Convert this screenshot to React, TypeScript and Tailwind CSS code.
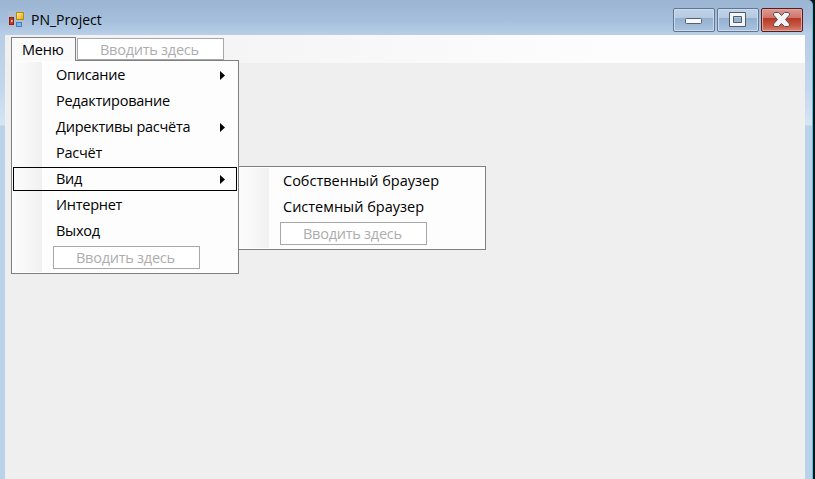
import React from "react";

type Item = { label: string; arrow?: boolean; active?: boolean };

const items: Item[] = [
  { label: "Описание", arrow: true },
  { label: "Редактирование" },
  { label: "Директивы расчёта", arrow: true },
  { label: "Расчёт" },
  { label: "Вид", arrow: true, active: true },
  { label: "Интернет" },
  { label: "Выход" },
];

const subItems: Item[] = [{ label: "Собственный браузер" }, { label: "Системный браузер" }];

function TypeHere({ className = "" }: { className?: string }) {
  return (
    <div
      className={`flex w-[147px] items-center border border-[#a8a8a8] bg-white pl-[22px] tracking-[-0.25px] text-[#adadad] ${className}`}
    >
      Вводить здесь
    </div>
  );
}

function MenuRow({ label, arrow, active }: Item) {
  return (
    <div className="flex h-[26px] items-center">
      <div
        className={`flex h-6 w-full items-center justify-between border pr-[11px] pl-[42px] ${
          active ? "border-black" : "border-transparent"
        }`}
      >
        <span>{label}</span>
        {arrow && (
          <svg width="5" height="9" viewBox="0 0 5 9">
            <path d="M0 0L5 4.5L0 9Z" fill="#000" />
          </svg>
        )}
      </div>
    </div>
  );
}

function Popup({ list, className }: { list: Item[]; className: string }) {
  return (
    <div className={`absolute border border-[#808080] bg-[#fdfdfd] p-px ${className}`}>
      <div className="h-full bg-[linear-gradient(to_right,#fcfcfc_0px,#f8f8f8_12px,#f0f0f0_29px,#fdfdfd_29px)]">
        {list.map((i) => (
          <MenuRow key={i.label} {...i} />
        ))}
        <TypeHere className="mt-[2px] ml-10 h-[23px]" />
      </div>
    </div>
  );
}

function AppIcon() {
  return (
    <svg width="17" height="17" viewBox="0 0 17 17">
      <defs>
        <linearGradient id="gold" x2="1" y2="1">
          <stop stopColor="#fff09a" />
          <stop offset="1" stopColor="#e3a70c" />
        </linearGradient>
      </defs>
      <rect width="17" height="17" fill="#b7bfce" opacity=".6" />
      <rect x="1.5" y="6.5" width="4" height="7" fill="#c23a22" stroke="#8b2114" />
      <rect x="3" y="9" width="1.5" height="2" fill="#ffd5c4" />
      <rect x="8.5" y="1.5" width="7" height="7" fill="url(#gold)" stroke="#b88716" />
      <rect x="8.5" y="11.5" width="5" height="4" fill="#77b4f2" stroke="#487fbf" />
    </svg>
  );
}

function WindowButtons() {
  const base = "flex h-6 w-[42px] items-center justify-center rounded-[2px] border";
  const blue =
    "border-[#63768f] bg-[linear-gradient(#c1d3e8_0%,#b4c9e1_42%,#94b0cf_43%,#aac3df_100%)] shadow-[inset_0_0_0_1px_#c9dcef]";
  return (
    <div className="flex gap-[2px]">
      <div className={`${base} ${blue}`}>
        <svg width="18" height="24" viewBox="0 0 18 24">
          <rect x=".5" y="10.5" width="16" height="5" rx="1" fill="#fafafa" stroke="#55606e" />
        </svg>
      </div>
      <div className={`${base} ${blue}`}>
        <svg width="18" height="24" viewBox="0 0 18 24">
          <path
            d="M.5 4.5H16.5V18.5H.5ZM4.5 8.5V14.5H12.5V8.5Z"
            fill="#f5f5f5"
            fillRule="evenodd"
            stroke="#505b69"
          />
        </svg>
      </div>
      <div
        className={`${base} border-[#561b24] bg-[linear-gradient(#dc9a91_0%,#ce7367_42%,#b8392a_43%,#c65843_75%,#d68570_100%)] shadow-[inset_0_0_0_1px_#e4a59b]`}
      >
        <svg width="18" height="24" viewBox="0 0 18 24">
          <path
            d="M1.5 4.5H5.5L8.5 7.5L11.5 4.5H15.5L16.5 6V7L12.5 11.5L16.5 16V17L15.5 18.5H11.5L8.5 15.5L5.5 18.5H1.5L.5 17V16L4.5 11.5L.5 7V6Z"
            fill="#f3f3f3"
            stroke="#5b4e54"
            strokeLinejoin="round"
          />
        </svg>
      </div>
    </div>
  );
}

export default function App() {
  return (
    <div className="h-[479px] w-[815px] overflow-hidden bg-[#061119] font-['Open_Sans','Noto_Sans',sans-serif] text-[14.5px] leading-5 text-black">
      <div className="relative flex h-full w-[813px] flex-col rounded-tr-[5px] border-r border-[#55c6df] bg-[linear-gradient(#9ab4d2_0px,#b8cde5_35px,#c3d7ed_90px,#d6e5f5_125px,#b9d1e9_126px)]">
        <header className="flex h-[35px] shrink-0 items-start justify-between rounded-tr-[5px] bg-[linear-gradient(#9ab4d2,#a5bfdc_60%,#b9cfe8)] pt-2 pr-[9px] pl-2">
          <div className="flex items-center gap-[6px] pt-[3px]">
            <AppIcon />
            <span className="text-[14px] leading-[17px]">PN_Project</span>
          </div>
          <WindowButtons />
        </header>
        <main className="mr-[7px] ml-[5px] flex-1 bg-[#efefef]">
          <nav className="flex h-7 bg-[linear-gradient(to_right,#f0f0f0,#fdfdfd_75%)] pt-[2px] pl-[6px]">
            <div className="mr-px h-6 w-[65px] border border-b-0 border-[#808080] bg-[#fafafa] pl-[10px] leading-[23px] tracking-[-0.2px]">
              Меню
            </div>
            <TypeHere className="mt-px h-[22px] pt-px" />
          </nav>
        </main>
        <Popup list={subItems} className="top-[166px] left-[238px] h-[84px] w-[248px]" />
        <Popup
          list={items}
          className="top-[60px] left-[11px] h-[214px] w-[228px] tracking-[-0.25px]"
        />
        <div className="absolute top-[60px] left-[12px] h-px w-[63px] bg-[#fafafa]" />
      </div>
    </div>
  );
}
